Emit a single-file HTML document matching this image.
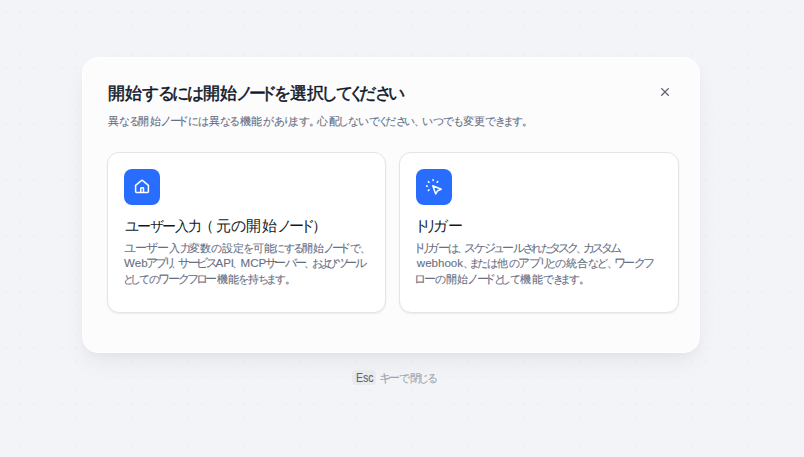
<!DOCTYPE html>
<html lang="ja">
<head>
<meta charset="utf-8">
<style>
html,body{margin:0;padding:0;}
body{width:804px;height:457px;overflow:hidden;background-color:#f2f4f7;background-image:radial-gradient(circle at 7px 7px,rgba(16,24,40,0.02) 0,rgba(16,24,40,0.02) 1px,rgba(16,24,40,0) 1.6px);background-size:14px 14px;background-position:13px 5px;position:relative;font-family:"Liberation Sans",sans-serif;}
.modal{position:absolute;left:82px;top:57px;width:618px;height:296px;box-sizing:border-box;background:#fcfcfd;border:1px solid #ffffff;border-radius:16px;box-shadow:0 12px 24px -4px rgba(16,24,40,0.06),0 4px 8px -2px rgba(16,24,40,0.03);}
.t{position:absolute;white-space:nowrap;line-height:20px;-webkit-text-stroke:0.1px currentColor;}
.close{position:absolute;left:657px;top:84px;width:16px;height:16px;}
.card{position:absolute;top:152px;width:278px;height:161px;box-sizing:border-box;background:#ffffff;border:1px solid #e3e5e9;border-radius:12px;box-shadow:0 1px 2px rgba(16,24,40,0.07);}
.icon{position:absolute;width:36px;height:36px;border-radius:8px;background:#296dff;top:169px;}
.kbd{position:absolute;left:351.5px;top:369.7px;width:24px;height:15.7px;background:#e8eaee;border-radius:4px;}
</style>
</head>
<body>
<div class="modal"></div>
<svg class="close" viewBox="0 0 16 16"><path d="M4.7 4.6L11.3 11.3M11.3 4.6L4.7 11.3" stroke="#5f6573" stroke-width="1.35" stroke-linecap="round" fill="none"/></svg>
<div class="card" style="left:107px;width:279px"></div>
<div class="icon" style="left:124px;top:168.8px">
<svg width="36" height="36" viewBox="0 0 36 36"><path d="M11.6 16.4L17.3 11.6a1 1 0 0 1 1.4 0L24.4 16.4v6a1 1 0 0 1-1 1H12.6a1 1 0 0 1-1-1z" stroke="#fff" stroke-width="1.5" fill="none" stroke-linejoin="round"/><path d="M16.8 23.4v-4a.7.7 0 0 1 .7-.7h1.3a.7.7 0 0 1 .7.7v4" stroke="#fff" stroke-width="1.5" fill="none" stroke-linejoin="round"/></svg>
</div>
<div class="card" style="left:399px;width:280px"></div>
<div class="icon" style="left:416px;top:168.8px">
<svg width="36" height="36" viewBox="0 0 36 36"><path d="M16.8 16.8L25.2 20.3L21.7 21.7L19.7 24.9Z" stroke="#fff" stroke-width="1.5" fill="none" stroke-linejoin="round"/><path d="M17.1 10.8v.7M12.4 12.7l.6.6M21.7 12.6l-.6.6M10.6 17.1h.7M13 20.8l-.6.7" stroke="#fff" stroke-width="1.6" stroke-linecap="round"/></svg>
</div>
<div class="kbd"></div>
<div class="t" id="title" style="left:107.75px;top:84.28px;font-size:17px;color:#101828;-webkit-text-stroke:0.5px currentColor;"><span style="letter-spacing:-0.01px">開</span><span style="letter-spacing:0.70px">始</span><span style="letter-spacing:-1.96px">す</span><span style="letter-spacing:-2.85px">る</span><span style="letter-spacing:-1.74px">に</span><span style="letter-spacing:-1.26px">は</span><span style="letter-spacing:-0.01px">開</span><span style="letter-spacing:-1.04px">始</span><span style="letter-spacing:-3.78px">ノ</span><span style="letter-spacing:-6.17px">ー</span><span style="letter-spacing:-2.87px">ド</span><span style="letter-spacing:-1.01px">を</span><span style="letter-spacing:0.35px">選</span><span style="letter-spacing:-2.80px">択</span><span style="letter-spacing:-2.27px">し</span><span style="letter-spacing:-5.44px">て</span><span style="letter-spacing:-5.58px">く</span><span style="letter-spacing:-1.24px">だ</span><span style="letter-spacing:-3.88px">さ</span><span style="letter-spacing:0.00px">い</span></div>
<div class="t" id="sub" style="left:107.80px;top:110.64px;font-size:11px;color:#676f83;"><span style="letter-spacing:0.14px">異</span><span style="letter-spacing:-1.23px;font-size:11.44px">な</span><span style="letter-spacing:-1.30px;font-size:11.44px">る</span><span style="letter-spacing:0.20px">開</span><span style="letter-spacing:-0.57px">始</span><span style="letter-spacing:-2.51px;font-size:11.88px">ノ</span><span style="letter-spacing:-4.18px;font-size:11.88px">ー</span><span style="letter-spacing:-1.71px;font-size:11.88px">ド</span><span style="letter-spacing:-1.00px;font-size:11.44px">に</span><span style="letter-spacing:-0.17px;font-size:11.44px">は</span><span style="letter-spacing:0.14px">異</span><span style="letter-spacing:-1.23px;font-size:11.44px">な</span><span style="letter-spacing:-0.66px;font-size:11.44px">る</span><span style="letter-spacing:0.38px">機</span><span style="letter-spacing:0.54px">能</span><span style="letter-spacing:0.40px;font-size:11.44px">が</span><span style="letter-spacing:-2.63px;font-size:11.44px">あ</span><span style="letter-spacing:-4.16px;font-size:11.44px">り</span><span style="letter-spacing:-1.71px;font-size:11.44px">ま</span><span style="letter-spacing:-0.96px;font-size:11.44px">す</span><span style="letter-spacing:-2.57px">。</span><span style="letter-spacing:0.56px">心</span><span style="letter-spacing:-1.47px">配</span><span style="letter-spacing:-1.43px;font-size:11.44px">し</span><span style="letter-spacing:-0.95px;font-size:11.44px">な</span><span style="letter-spacing:-0.24px;font-size:11.44px">い</span><span style="letter-spacing:-1.88px;font-size:11.44px">で</span><span style="letter-spacing:-3.58px;font-size:11.44px">く</span><span style="letter-spacing:-0.66px;font-size:11.44px">だ</span><span style="letter-spacing:-2.44px;font-size:11.44px">さ</span><span style="letter-spacing:-0.75px;font-size:11.44px">い</span><span style="letter-spacing:-3.73px">、</span><span style="letter-spacing:-0.02px;font-size:11.44px">い</span><span style="letter-spacing:-0.62px;font-size:11.44px">つ</span><span style="letter-spacing:-1.02px;font-size:11.44px">で</span><span style="letter-spacing:-1.23px;font-size:11.44px">も</span><span style="letter-spacing:0.22px">変</span><span style="letter-spacing:-0.02px">更</span><span style="letter-spacing:-0.64px;font-size:11.44px">で</span><span style="letter-spacing:-3.68px;font-size:11.44px">き</span><span style="letter-spacing:-1.71px;font-size:11.44px">ま</span><span style="letter-spacing:-0.96px;font-size:11.44px">す</span><span style="letter-spacing:0.00px">。</span></div>
<div class="t" id="ct1a" style="left:125.24px;top:215.55px;font-size:14px;color:#101828;-webkit-text-stroke:0;"><span style="letter-spacing:-2.15px">ユ</span><span style="letter-spacing:-1.59px">ー</span><span style="letter-spacing:-1.55px">ザ</span><span style="letter-spacing:-1.34px">ー</span><span style="letter-spacing:-0.89px">入</span><span style="letter-spacing:0.00px">力</span></div>
<div class="t" id="ct1b" style="left:199.06px;top:215.55px;font-size:15px;color:#101828;-webkit-text-stroke:0;"><span style="letter-spacing:1.63px">（</span><span style="letter-spacing:0.66px">元</span><span style="letter-spacing:0.06px">の</span><span style="letter-spacing:0.71px">開</span><span style="letter-spacing:-0.20px">始</span><span style="letter-spacing:-2.62px">ノ</span><span style="letter-spacing:-4.73px">ー</span><span style="letter-spacing:-2.46px">ド</span><span style="letter-spacing:0.00px">）</span></div>
<div class="t" id="d1a" style="left:124.32px;top:237.64px;font-size:11px;color:#676f83;"><span style="letter-spacing:-1.28px;font-size:11.88px">ユ</span><span style="letter-spacing:-0.81px;font-size:11.88px">ー</span><span style="letter-spacing:-0.77px;font-size:11.88px">ザ</span><span style="letter-spacing:-0.59px;font-size:11.88px">ー</span><span style="letter-spacing:-0.16px">入</span><span style="letter-spacing:-1.36px">力</span><span style="letter-spacing:0.04px">変</span><span style="letter-spacing:-0.16px">数</span><span style="letter-spacing:-0.32px;font-size:11.44px">の</span><span style="letter-spacing:0.07px">設</span><span style="letter-spacing:-1.34px">定</span><span style="letter-spacing:-0.92px;font-size:11.44px">を</span><span style="letter-spacing:-0.11px">可</span><span style="letter-spacing:-0.78px">能</span><span style="letter-spacing:-0.97px;font-size:11.44px">に</span><span style="letter-spacing:-1.70px;font-size:11.44px">す</span><span style="letter-spacing:-1.86px;font-size:11.44px">る</span><span style="letter-spacing:-0.35px">開</span><span style="letter-spacing:-1.12px">始</span><span style="letter-spacing:-3.06px;font-size:11.88px">ノ</span><span style="letter-spacing:-4.73px;font-size:11.88px">ー</span><span style="letter-spacing:-1.70px;font-size:11.88px">ド</span><span style="letter-spacing:-0.51px;font-size:11.44px">で</span><span style="letter-spacing:0.00px">、</span></div>
<div class="t" id="d1b" style="left:124.00px;top:253.44px;font-size:11px;color:#676f83;"><span style="letter-spacing:0.00px;font-size:11.55px">W</span><span style="letter-spacing:0.00px;font-size:11.55px">e</span><span style="letter-spacing:-1.84px;font-size:11.55px">b</span><span style="letter-spacing:-2.83px;font-size:11.88px">ア</span><span style="letter-spacing:-3.37px;font-size:11.88px">プ</span><span style="letter-spacing:-5.01px;font-size:11.88px">リ</span><span style="letter-spacing:-3.27px">、</span><span style="letter-spacing:-2.70px;font-size:11.88px">サ</span><span style="letter-spacing:-3.99px;font-size:11.88px">ー</span><span style="letter-spacing:-1.77px;font-size:11.88px">ビ</span><span style="letter-spacing:-2.40px;font-size:11.88px">ス</span><span style="letter-spacing:0.00px;font-size:11.55px">A</span><span style="letter-spacing:0.00px;font-size:11.55px">P</span><span style="letter-spacing:-1.72px;font-size:11.55px">I</span><span style="letter-spacing:-2.75px">、</span><span style="letter-spacing:0.00px;font-size:11.55px">M</span><span style="letter-spacing:0.00px;font-size:11.55px">C</span><span style="letter-spacing:-1.17px;font-size:11.55px">P</span><span style="letter-spacing:-2.70px;font-size:11.88px">サ</span><span style="letter-spacing:-1.67px;font-size:11.88px">ー</span><span style="letter-spacing:-1.66px;font-size:11.88px">バ</span><span style="letter-spacing:-2.79px;font-size:11.88px">ー</span><span style="letter-spacing:-3.61px">、</span><span style="letter-spacing:-3.00px;font-size:11.44px">お</span><span style="letter-spacing:-3.65px;font-size:11.44px">よ</span><span style="letter-spacing:-1.43px;font-size:11.44px">び</span><span style="letter-spacing:-3.23px;font-size:11.88px">ツ</span><span style="letter-spacing:-2.06px;font-size:11.88px">ー</span><span style="letter-spacing:0.00px;font-size:11.88px">ル</span></div>
<div class="t" id="d1c" style="left:123.31px;top:269.24px;font-size:11px;color:#676f83;"><span style="letter-spacing:-4.44px;font-size:11.44px">と</span><span style="letter-spacing:-1.79px;font-size:11.44px">し</span><span style="letter-spacing:-1.38px;font-size:11.44px">て</span><span style="letter-spacing:-1.66px;font-size:11.44px">の</span><span style="letter-spacing:-2.44px;font-size:11.88px">ワ</span><span style="letter-spacing:-1.55px;font-size:11.88px">ー</span><span style="letter-spacing:-2.84px;font-size:11.88px">ク</span><span style="letter-spacing:-3.27px;font-size:11.88px">フ</span><span style="letter-spacing:-2.90px;font-size:11.88px">ロ</span><span style="letter-spacing:-0.38px;font-size:11.88px">ー</span><span style="letter-spacing:-0.06px">機</span><span style="letter-spacing:-0.78px">能</span><span style="letter-spacing:-0.66px;font-size:11.44px">を</span><span style="letter-spacing:-0.75px">持</span><span style="letter-spacing:-3.19px;font-size:11.44px">ち</span><span style="letter-spacing:-2.15px;font-size:11.44px">ま</span><span style="letter-spacing:-1.40px;font-size:11.44px">す</span><span style="letter-spacing:0.00px">。</span></div>
<div class="t" id="ct2" style="left:413.50px;top:215.55px;font-size:15px;color:#101828;-webkit-text-stroke:0;"><span style="letter-spacing:-6.24px">ト</span><span style="letter-spacing:-4.40px">リ</span><span style="letter-spacing:-0.16px">ガ</span><span style="letter-spacing:0.00px">ー</span></div>
<div class="t" id="d2a" style="left:412.81px;top:237.64px;font-size:11px;color:#676f83;"><span style="letter-spacing:-5.76px;font-size:11.88px">ト</span><span style="letter-spacing:-4.30px;font-size:11.88px">リ</span><span style="letter-spacing:-0.95px;font-size:11.88px">ガ</span><span style="letter-spacing:-1.81px;font-size:11.88px">ー</span><span style="letter-spacing:-2.14px;font-size:11.44px">は</span><span style="letter-spacing:-3.63px">、</span><span style="letter-spacing:-1.88px;font-size:11.88px">ス</span><span style="letter-spacing:-2.48px;font-size:11.88px">ケ</span><span style="letter-spacing:-2.75px;font-size:11.88px">ジ</span><span style="letter-spacing:-3.00px;font-size:11.88px">ュ</span><span style="letter-spacing:-1.36px;font-size:11.88px">ー</span><span style="letter-spacing:-1.75px;font-size:11.88px">ル</span><span style="letter-spacing:-2.85px;font-size:11.44px">さ</span><span style="letter-spacing:-1.21px;font-size:11.44px">れ</span><span style="letter-spacing:-2.72px;font-size:11.44px">た</span><span style="letter-spacing:-3.13px;font-size:11.88px">タ</span><span style="letter-spacing:-2.90px;font-size:11.88px">ス</span><span style="letter-spacing:-3.31px;font-size:11.88px">ク</span><span style="letter-spacing:-3.79px">、</span><span style="letter-spacing:-2.96px;font-size:11.88px">カ</span><span style="letter-spacing:-3.07px;font-size:11.88px">ス</span><span style="letter-spacing:-2.90px;font-size:11.88px">タ</span><span style="letter-spacing:0.00px;font-size:11.88px">ム</span></div>
<div class="t" id="d2b" style="left:416.80px;top:253.44px;font-size:11px;color:#676f83;"><span style="letter-spacing:0.00px;font-size:11.55px">w</span><span style="letter-spacing:0.00px;font-size:11.55px">e</span><span style="letter-spacing:0.00px;font-size:11.55px">b</span><span style="letter-spacing:0.00px;font-size:11.55px">h</span><span style="letter-spacing:0.00px;font-size:11.55px">o</span><span style="letter-spacing:0.00px;font-size:11.55px">o</span><span style="letter-spacing:-0.33px;font-size:11.55px">k</span><span style="letter-spacing:-4.90px">、</span><span style="letter-spacing:-2.59px;font-size:11.44px">ま</span><span style="letter-spacing:-1.45px;font-size:11.44px">た</span><span style="letter-spacing:-0.38px;font-size:11.44px">は</span><span style="letter-spacing:0.16px">他</span><span style="letter-spacing:-1.23px;font-size:11.44px">の</span><span style="letter-spacing:-1.43px;font-size:11.88px">ア</span><span style="letter-spacing:-1.98px;font-size:11.88px">プ</span><span style="letter-spacing:-4.54px;font-size:11.88px">リ</span><span style="letter-spacing:-2.37px;font-size:11.44px">と</span><span style="letter-spacing:-0.25px;font-size:11.44px">の</span><span style="letter-spacing:0.27px">統</span><span style="letter-spacing:-0.32px">合</span><span style="letter-spacing:-2.20px;font-size:11.44px">な</span><span style="letter-spacing:-0.71px;font-size:11.44px">ど</span><span style="letter-spacing:-4.35px">、</span><span style="letter-spacing:-2.41px;font-size:11.88px">ワ</span><span style="letter-spacing:-1.53px;font-size:11.88px">ー</span><span style="letter-spacing:-2.81px;font-size:11.88px">ク</span><span style="letter-spacing:0.00px;font-size:11.88px">フ</span></div>
<div class="t" id="d2c" style="left:414.25px;top:269.24px;font-size:11px;color:#676f83;"><span style="letter-spacing:-2.59px;font-size:11.88px">ロ</span><span style="letter-spacing:-0.49px;font-size:11.88px">ー</span><span style="letter-spacing:-0.43px;font-size:11.44px">の</span><span style="letter-spacing:0.07px">開</span><span style="letter-spacing:-0.70px">始</span><span style="letter-spacing:-2.64px;font-size:11.88px">ノ</span><span style="letter-spacing:-4.31px;font-size:11.88px">ー</span><span style="letter-spacing:-2.72px;font-size:11.88px">ド</span><span style="letter-spacing:-4.14px;font-size:11.44px">と</span><span style="letter-spacing:-1.49px;font-size:11.44px">し</span><span style="letter-spacing:-0.66px;font-size:11.44px">て</span><span style="letter-spacing:0.24px">機</span><span style="letter-spacing:0.20px">能</span><span style="letter-spacing:-0.77px;font-size:11.44px">で</span><span style="letter-spacing:-3.81px;font-size:11.44px">き</span><span style="letter-spacing:-1.85px;font-size:11.44px">ま</span><span style="letter-spacing:-1.10px;font-size:11.44px">す</span><span style="letter-spacing:0.00px">。</span></div>
<div class="t" id="esc" style="left:355.70px;top:368.2px;font-size:12.5px;color:#5b6274;transform:scaleX(0.84);transform-origin:0 50%;-webkit-text-stroke:0.1px currentColor;"><span style="letter-spacing:0.00px">E</span><span style="letter-spacing:0.00px">s</span><span style="letter-spacing:0.00px">c</span></div>
<div class="t" id="hint" style="left:378.67px;top:368.2px;font-size:11px;color:#9ea3ae;"><span style="letter-spacing:-2.23px;font-size:11.88px">キ</span><span style="letter-spacing:-1.09px;font-size:11.88px">ー</span><span style="letter-spacing:-0.18px;font-size:11.44px">で</span><span style="letter-spacing:-2.96px">閉</span><span style="letter-spacing:-2.65px;font-size:11.44px">じ</span><span style="letter-spacing:0.00px;font-size:11.44px">る</span></div>

</body>
</html>
